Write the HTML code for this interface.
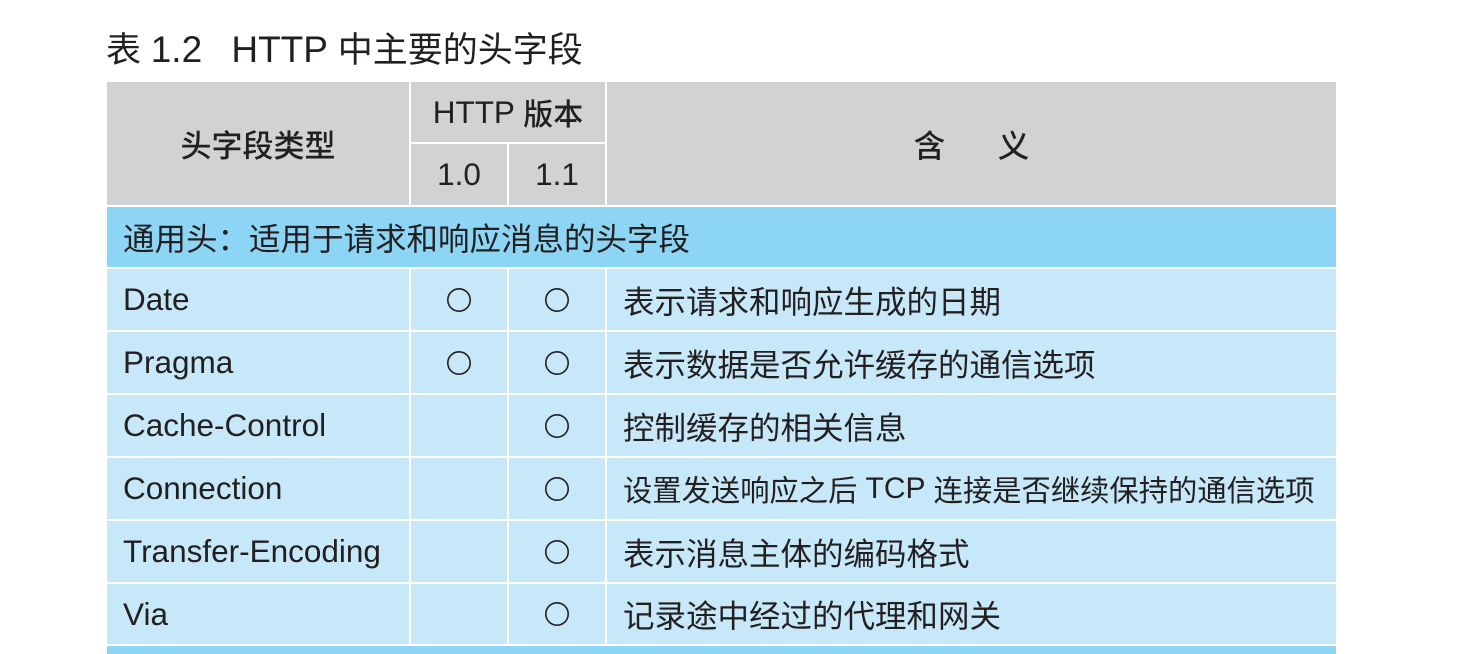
<!DOCTYPE html>
<html><head><meta charset="utf-8"><style>
body{margin:0;width:1474px;height:654px;background:#fff;position:relative;overflow:hidden;font-family:"Liberation Sans","Noto Sans CJK SC",sans-serif;color:#231f20}
.c{position:absolute;display:flex;align-items:center;font-size:31.5px;box-sizing:border-box;white-space:nowrap}
.g{background:#d1d2d4;justify-content:center;font-weight:500}
.b{background:#c6e8f8}
.s{background:#8dd5f5}
.l{padding-left:16px}
.m{justify-content:center}
.e{font-size:31.5px}
.t{position:absolute;left:106px;top:22px;font-size:35px;white-space:pre}
.t .e{font-size:37px}
</style></head><body>
<svg width="0" height="0" style="position:absolute"><defs><symbol id="o" viewBox="0 0 26 26"><circle cx="13" cy="13" r="11.2" fill="none" stroke="#231f20" stroke-width="1.6"/></symbol></defs></svg>
<div class="t">表 <span class="e">1.2</span>   <span class="e">HTTP</span> 中主要的头字段</div>
<div class="c g" style="left:107px;top:82px;width:302px;height:123px;font-size:31px">头字段类型</div>
<div class="c g" style="left:411px;top:82px;width:194px;height:60px;font-size:30px"><span class="e">HTTP</span>&nbsp;版本</div>
<div class="c g" style="left:411px;top:144px;width:96px;height:61px"><span class="e">1.0</span></div>
<div class="c g" style="left:509px;top:144px;width:96px;height:61px"><span class="e">1.1</span></div>
<div class="c g" style="left:607px;top:82px;width:729px;height:123px;white-space:pre">含      义</div>
<div class="c s l" style="left:107px;top:207px;width:1229px;height:60px">通用头：适用于请求和响应消息的头字段</div>

<div class="c b l e" style="left:107px;top:269px;width:302px;height:61px">Date</div>
<div class="c b m" style="left:411px;top:269px;width:96px;height:61px"><svg width="26" height="26"><use href="#o"/></svg></div>
<div class="c b m" style="left:509px;top:269px;width:96px;height:61px"><svg width="26" height="26"><use href="#o"/></svg></div>
<div class="c b l" style="left:607px;top:269px;width:729px;height:61px">表示请求和响应生成的日期</div>

<div class="c b l e" style="left:107px;top:332px;width:302px;height:61px">Pragma</div>
<div class="c b m" style="left:411px;top:332px;width:96px;height:61px"><svg width="26" height="26"><use href="#o"/></svg></div>
<div class="c b m" style="left:509px;top:332px;width:96px;height:61px"><svg width="26" height="26"><use href="#o"/></svg></div>
<div class="c b l" style="left:607px;top:332px;width:729px;height:61px">表示数据是否允许缓存的通信选项</div>

<div class="c b l e" style="left:107px;top:395px;width:302px;height:61px">Cache-Control</div>
<div class="c b m" style="left:411px;top:395px;width:96px;height:61px"></div>
<div class="c b m" style="left:509px;top:395px;width:96px;height:61px"><svg width="26" height="26"><use href="#o"/></svg></div>
<div class="c b l" style="left:607px;top:395px;width:729px;height:61px">控制缓存的相关信息</div>

<div class="c b l e" style="left:107px;top:458px;width:302px;height:61px">Connection</div>
<div class="c b m" style="left:411px;top:458px;width:96px;height:61px"></div>
<div class="c b m" style="left:509px;top:458px;width:96px;height:61px"><svg width="26" height="26"><use href="#o"/></svg></div>
<div class="c b l" style="left:607px;top:458px;width:729px;height:61px;font-size:29.3px">设置发送响应之后&nbsp;<span style="font-size:30px">TCP</span>&nbsp;连接是否继续保持的通信选项</div>

<div class="c b l e" style="left:107px;top:521px;width:302px;height:61px">Transfer-Encoding</div>
<div class="c b m" style="left:411px;top:521px;width:96px;height:61px"></div>
<div class="c b m" style="left:509px;top:521px;width:96px;height:61px"><svg width="26" height="26"><use href="#o"/></svg></div>
<div class="c b l" style="left:607px;top:521px;width:729px;height:61px">表示消息主体的编码格式</div>

<div class="c b l e" style="left:107px;top:584px;width:302px;height:60px">Via</div>
<div class="c b m" style="left:411px;top:584px;width:96px;height:60px"></div>
<div class="c b m" style="left:509px;top:584px;width:96px;height:60px"><svg width="26" height="26"><use href="#o"/></svg></div>
<div class="c b l" style="left:607px;top:584px;width:729px;height:60px">记录途中经过的代理和网关</div>

<div class="c s" style="left:107px;top:646px;width:1229px;height:8px"></div>
</body></html>
